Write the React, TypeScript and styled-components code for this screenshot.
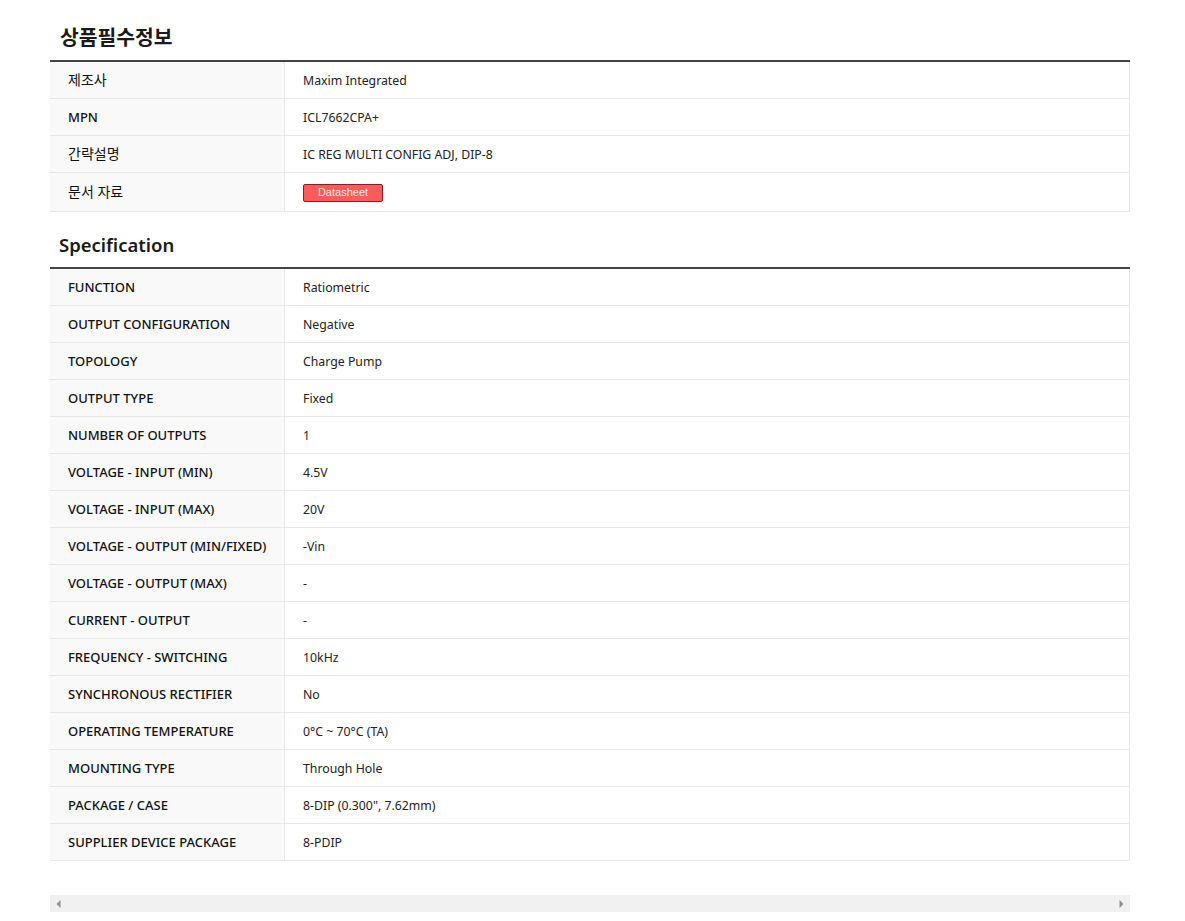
import React from "react";
import styled, { createGlobalStyle } from "styled-components";

const GlobalStyle = createGlobalStyle`
  html, body {
    margin: 0;
    padding: 0;
    background: #fff;
    overflow: hidden;
  }
  body {
    font-family: "Noto Sans", "Noto Sans CJK KR", sans-serif;
    color: #222;
  }
`;

const Page = styled.div`
  width: 1080px;
  margin: 0 0 0 50px;
  padding-top: 22px;
`;

const Heading = styled.h2<{ $indent: number; $height: number; $size: number }>`
  margin: 0;
  height: ${(p) => p.$height}px;
  padding-left: ${(p) => p.$indent}px;
  font-family: "Noto Sans", "Noto Sans CJK KR", sans-serif;
  font-size: ${(p) => p.$size}px;
  line-height: 30px;
  font-weight: 600;
  color: #1a1a1a;
`;

const SpecTable = styled.table`
  width: 100%;
  border-collapse: separate;
  border-spacing: 0;
  table-layout: fixed;
  border-top: 2px solid #444;
  margin-bottom: 18px;
`;

const Label = styled.th<{ $ko?: boolean; $tall?: boolean }>`
  width: 235px;
  height: ${(p) => (p.$tall ? 39 : 37)}px;
  padding: 0 0 ${(p) => (p.$ko ? 2 : 0)}px 18px;
  box-sizing: border-box;
  background: #f9f9f9;
  border-right: 1px solid #e8e8e8;
  border-bottom: 1px solid #e8e8e8;
  text-align: left;
  font-size: ${(p) => (p.$ko ? 14 : 13)}px;
  font-weight: ${(p) => (p.$ko ? 400 : 500)};
  color: #111;
`;

const Value = styled.td`
  box-sizing: border-box;
  height: 37px;
  padding: 0 0 0 18px;
  border-right: 1px solid #e8e8e8;
  border-bottom: 1px solid #e8e8e8;
  font-size: 12.3px;
  color: #222;
`;

const DatasheetButton = styled.a`
  display: block;
  box-sizing: border-box;
  width: 80px;
  height: 18px;
  margin-top: 1px;
  background: #fa5c5c;
  border: 1px solid #8e1c22;
  border-radius: 2px;
  color: #fbe4e4;
  text-align: center;
  font-family: "Liberation Sans", Arial, sans-serif;
  font-size: 11px;
  line-height: 15px;
`;

const ScrollBar = styled.div`
  display: flex;
  align-items: center;
  justify-content: space-between;
  height: 17px;
  margin-top: 34px;
  background: #f1f1f1;
`;

const ScrollArrow = styled.button`
  display: flex;
  align-items: center;
  justify-content: center;
  width: 17px;
  height: 17px;
  padding: 0;
  border: 0;
  background: transparent;
`;

const Arrow = ({ right }: { right?: boolean }) => (
  <svg width="5" height="8" viewBox="0 0 5 8">
    <path d={right ? "M0.5 0 L4.5 4 L0.5 8 Z" : "M4.5 0 L0.5 4 L4.5 8 Z"} fill="#8f8f8f" />
  </svg>
);

type Row = [string, string];

const specs: Row[] = [
  ["FUNCTION", "Ratiometric"],
  ["OUTPUT CONFIGURATION", "Negative"],
  ["TOPOLOGY", "Charge Pump"],
  ["OUTPUT TYPE", "Fixed"],
  ["NUMBER OF OUTPUTS", "1"],
  ["VOLTAGE - INPUT (MIN)", "4.5V"],
  ["VOLTAGE - INPUT (MAX)", "20V"],
  ["VOLTAGE - OUTPUT (MIN/FIXED)", "-Vin"],
  ["VOLTAGE - OUTPUT (MAX)", "-"],
  ["CURRENT - OUTPUT", "-"],
  ["FREQUENCY - SWITCHING", "10kHz"],
  ["SYNCHRONOUS RECTIFIER", "No"],
  ["OPERATING TEMPERATURE", "0°C ~ 70°C (TA)"],
  ["MOUNTING TYPE", "Through Hole"],
  ["PACKAGE / CASE", '8-DIP (0.300", 7.62mm)'],
  ["SUPPLIER DEVICE PACKAGE", "8-PDIP"],
];

export default function App() {
  return (
    <Page>
      <GlobalStyle />
      <Heading $indent={10} $height={38} $size={20.4}>
        상품필수정보
      </Heading>
      <SpecTable>
        <tbody>
          <tr>
            <Label $ko>제조사</Label>
            <Value>Maxim Integrated</Value>
          </tr>
          <tr>
            <Label>MPN</Label>
            <Value>ICL7662CPA+</Value>
          </tr>
          <tr>
            <Label $ko>간략설명</Label>
            <Value>IC REG MULTI CONFIG ADJ, DIP-8</Value>
          </tr>
          <tr>
            <Label $ko $tall>
              문서 자료
            </Label>
            <Value>
              <DatasheetButton>Datasheet</DatasheetButton>
            </Value>
          </tr>
        </tbody>
      </SpecTable>
      <Heading $indent={9} $height={37} $size={18.5}>
        Specification
      </Heading>
      <SpecTable>
        <tbody>
          {specs.map(([name, value]) => (
            <tr key={name}>
              <Label>{name}</Label>
              <Value>{value}</Value>
            </tr>
          ))}
        </tbody>
      </SpecTable>
      <ScrollBar>
        <ScrollArrow>
          <Arrow />
        </ScrollArrow>
        <ScrollArrow>
          <Arrow right />
        </ScrollArrow>
      </ScrollBar>
    </Page>
  );
}
